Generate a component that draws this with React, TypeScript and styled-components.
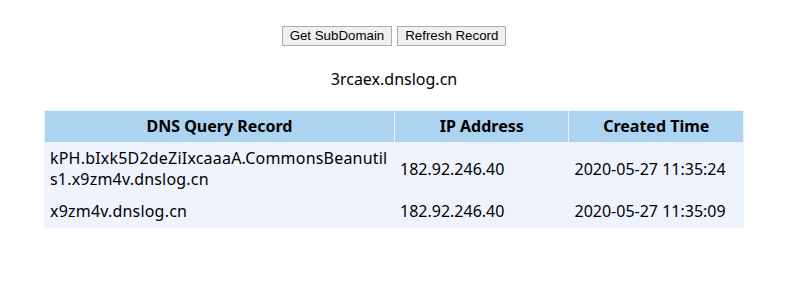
import React from "react";
import styled, { createGlobalStyle } from "styled-components";

const GlobalStyle = createGlobalStyle`
  html, body {
    margin: 0;
    padding: 0;
    background: #ffffff;
  }
  body {
    font-family: "Noto Sans", "Open Sans", sans-serif;
    color: #000000;
  }
`;

const Page = styled.div`
  width: 788px;
  padding-top: 26px;
  display: flex;
  flex-direction: column;
  align-items: center;
`;

const Toolbar = styled.div`
  display: flex;
  gap: 5px;
`;

const Button = styled.button`
  font-family: "Liberation Sans", Arial, sans-serif;
  font-size: 13.3px;
  color: #000000;
  height: 20px;
  padding: 0 7px;
  background: #f0f0f0;
  border: 1px solid #adadad;
  border-radius: 0;
  line-height: 18px;
`;

const Domain = styled.div`
  margin-top: 21px;
  font-size: 16px;
  line-height: 24px;
`;

const Table = styled.table`
  margin-top: 19px;
  width: 700px;
  border-collapse: separate;
  border-spacing: 1px;
  background: #eef3fe;
  font-size: 16px;
  table-layout: fixed;
`;

const HeadCell = styled.th<{ $w: string }>`
  box-sizing: border-box;
  width: ${(p) => p.$w};
  background: #acd3ef;
  font-weight: 700;
  height: 31px;
  padding: 0 5px;
  text-align: center;
  line-height: 21px;
`;

const Cell = styled.td<{ $query?: boolean }>`
  box-sizing: border-box;
  padding: 5px 5px;
  text-align: left;
  line-height: 21px;
  word-break: break-all;
  vertical-align: middle;
  letter-spacing: ${(p) => (p.$query ? "0.2px" : "0")};
`;

const rows = [
  {
    q: "kPH.bIxk5D2deZiIxcaaaA.CommonsBeanutils1.x9zm4v.dnslog.cn",
    ip: "182.92.246.40",
    t: "2020-05-27 11:35:24",
  },
  { q: "x9zm4v.dnslog.cn", ip: "182.92.246.40", t: "2020-05-27 11:35:09" },
];

export default function App() {
  return (
    <>
      <GlobalStyle />
      <Page>
        <Toolbar>
          <Button>Get SubDomain</Button>
          <Button>Refresh Record</Button>
        </Toolbar>
        <Domain>3rcaex.dnslog.cn</Domain>
        <Table>
          <thead>
            <tr>
              <HeadCell $w="348px">DNS Query Record</HeadCell>
              <HeadCell $w="173px">IP Address</HeadCell>
              <HeadCell $w="173px">Created Time</HeadCell>
            </tr>
          </thead>
          <tbody>
            {rows.map((r, i) => (
              <tr key={i}>
                <Cell $query>{r.q}</Cell>
                <Cell>{r.ip}</Cell>
                <Cell>{r.t}</Cell>
              </tr>
            ))}
          </tbody>
        </Table>
      </Page>
    </>
  );
}
